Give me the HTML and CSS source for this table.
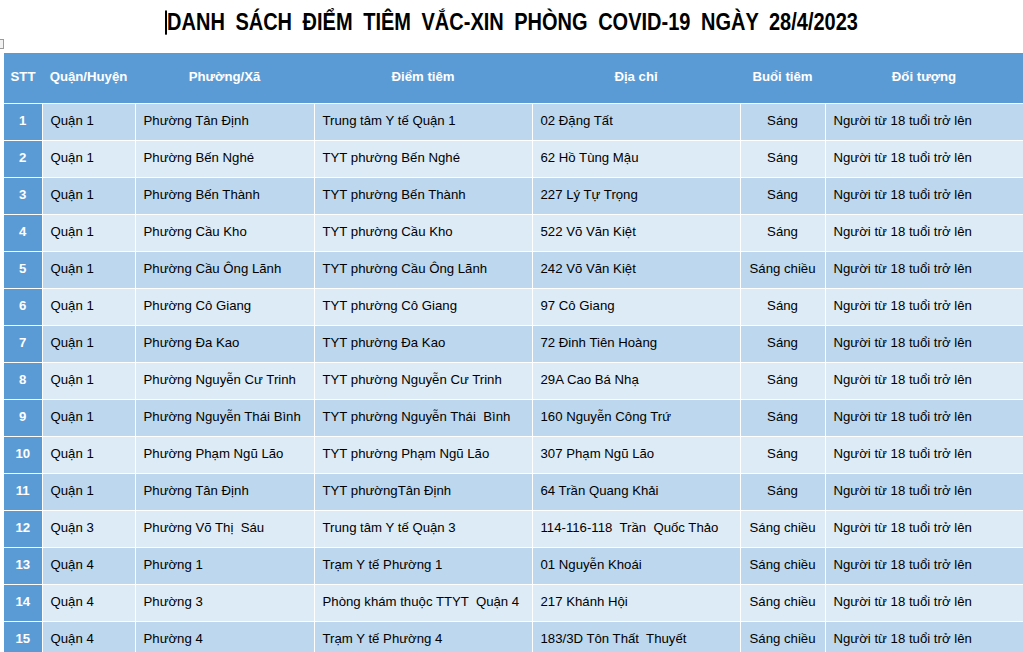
FILE: index.html
```html
<!DOCTYPE html>
<html lang="vi">
<head>
<meta charset="utf-8">
<title>Danh sách điểm tiêm</title>
<link rel="stylesheet" href="styles.css">
</head>
<body>
<div class="handle"></div>
<h1 class="title"><span class="caret"></span>DANH SÁCH ĐIỂM TIÊM VẮC-XIN PHÒNG COVID-19 NGÀY 28/4/2023</h1>
<table class="grid">
  <colgroup>
    <col class="c-stt"><col class="c-quan"><col class="c-phuong"><col class="c-diem"><col class="c-dc"><col class="c-buoi"><col class="c-dt">
  </colgroup>
  <thead>
    <tr><th>STT</th><th>Quận/Huyện</th><th>Phường/Xã</th><th>Điểm tiêm</th><th>Địa chỉ</th><th>Buổi tiêm</th><th>Đối tượng</th></tr>
  </thead>
  <tbody>
    <tr><td class="stt">1</td><td>Quận 1</td><td>Phường Tân Định</td><td>Trung tâm Y tế Quận 1</td><td>02 Đặng Tất</td><td class="mid">Sáng</td><td>Người từ 18 tuổi trở lên</td></tr>
    <tr><td class="stt">2</td><td>Quận 1</td><td>Phường Bến Nghé</td><td>TYT phường Bến Nghé</td><td>62 Hồ Tùng Mậu</td><td class="mid">Sáng</td><td>Người từ 18 tuổi trở lên</td></tr>
    <tr><td class="stt">3</td><td>Quận 1</td><td>Phường Bến Thành</td><td>TYT phường Bến Thành</td><td>227 Lý Tự Trọng</td><td class="mid">Sáng</td><td>Người từ 18 tuổi trở lên</td></tr>
    <tr><td class="stt">4</td><td>Quận 1</td><td>Phường Cầu Kho</td><td>TYT phường Cầu Kho</td><td>522 Võ Văn Kiệt</td><td class="mid">Sáng</td><td>Người từ 18 tuổi trở lên</td></tr>
    <tr><td class="stt">5</td><td>Quận 1</td><td>Phường Cầu Ông Lãnh</td><td>TYT phường Cầu Ông Lãnh</td><td>242 Võ Văn Kiệt</td><td class="mid">Sáng chiều</td><td>Người từ 18 tuổi trở lên</td></tr>
    <tr><td class="stt">6</td><td>Quận 1</td><td>Phường Cô Giang</td><td>TYT phường Cô Giang</td><td>97 Cô Giang</td><td class="mid">Sáng</td><td>Người từ 18 tuổi trở lên</td></tr>
    <tr><td class="stt">7</td><td>Quận 1</td><td>Phường Đa Kao</td><td>TYT phường Đa Kao</td><td>72 Đinh Tiên Hoàng</td><td class="mid">Sáng</td><td>Người từ 18 tuổi trở lên</td></tr>
    <tr><td class="stt">8</td><td>Quận 1</td><td>Phường Nguyễn Cư Trinh</td><td>TYT phường Nguyễn Cư Trinh</td><td>29A Cao Bá Nhạ</td><td class="mid">Sáng</td><td>Người từ 18 tuổi trở lên</td></tr>
    <tr><td class="stt">9</td><td>Quận 1</td><td>Phường Nguyễn Thái Bình</td><td>TYT phường Nguyễn Thái  Bình</td><td>160 Nguyễn Công Trứ</td><td class="mid">Sáng</td><td>Người từ 18 tuổi trở lên</td></tr>
    <tr><td class="stt">10</td><td>Quận 1</td><td>Phường Phạm Ngũ Lão</td><td>TYT phường Phạm Ngũ Lão</td><td>307 Phạm Ngũ Lão</td><td class="mid">Sáng</td><td>Người từ 18 tuổi trở lên</td></tr>
    <tr><td class="stt">11</td><td>Quận 1</td><td>Phường Tân Định</td><td>TYT phườngTân Định</td><td>64 Trần Quang Khải</td><td class="mid">Sáng</td><td>Người từ 18 tuổi trở lên</td></tr>
    <tr><td class="stt">12</td><td>Quận 3</td><td>Phường Võ Thị  Sáu</td><td>Trung tâm Y tế Quận 3</td><td>114-116-118  Trần  Quốc Thảo</td><td class="mid">Sáng chiều</td><td>Người từ 18 tuổi trở lên</td></tr>
    <tr><td class="stt">13</td><td>Quận 4</td><td>Phường 1</td><td>Trạm Y tế Phường 1</td><td>01 Nguyễn Khoái</td><td class="mid">Sáng chiều</td><td>Người từ 18 tuổi trở lên</td></tr>
    <tr><td class="stt">14</td><td>Quận 4</td><td>Phường 3</td><td>Phòng khám thuộc TTYT  Quận 4</td><td>217 Khánh Hội</td><td class="mid">Sáng chiều</td><td>Người từ 18 tuổi trở lên</td></tr>
    <tr><td class="stt">15</td><td>Quận 4</td><td>Phường 4</td><td>Trạm Y tế Phường 4</td><td>183/3D Tôn Thất  Thuyết</td><td class="mid">Sáng chiều</td><td>Người từ 18 tuổi trở lên</td></tr>
  </tbody>
</table>
</body>
</html>
```

FILE: styles.css
```css
html, body {
  margin: 0;
  padding: 0;
  background: #ffffff;
  overflow: hidden;
}
body {
  position: relative;
  width: 1023px;
  height: 652px;
  font-family: "Liberation Sans", Arial, sans-serif;
  color: #000;
}
.handle {
  position: absolute;
  left: -4px;
  top: 39px;
  width: 6px;
  height: 8px;
  border: 1px solid #9a9a9a;
  background: #f2f2f2;
}
.title {
  margin: 0;
  height: 53px;
  box-sizing: border-box;
  padding-top: 9px;
  text-align: center;
  font-size: 20px;
  font-weight: bold;
  line-height: 26px;
  word-spacing: 5px;
  white-space: pre;
  transform: scaleY(1.15);
  transform-origin: 50% 22px;
}
.caret {
  display: inline-block;
  width: 2px;
  height: 21px;
  background: #000;
  vertical-align: -4px;
}
.grid {
  margin-left: 4px;
  width: 1019px;
  table-layout: fixed;
  border-collapse: collapse;
  font-size: 13.2px;
}
.c-stt { width: 38px; }
.c-quan { width: 93px; }
.c-phuong { width: 179px; }
.c-diem { width: 218px; }
.c-dc { width: 208px; }
.c-buoi { width: 85px; }
.c-dt { width: 198px; }
.grid th {
  background: #5b9bd5;
  color: #fff;
  font-weight: bold;
  height: 50px;
  padding: 0 0 3px 0;
  box-sizing: border-box;
  text-align: center;
  border: none;
  border-bottom: 1px solid #fff;
  white-space: nowrap;
}
.grid td {
  height: 37px;
  box-sizing: border-box;
  padding: 0 0 3px 8px;
  border: 1px solid #fff;
  white-space: pre;
  overflow: hidden;
}
.grid tbody tr:nth-child(odd) td { background: #bdd7ee; }
.grid tbody tr:nth-child(even) td { background: #ddebf7; }
.grid tbody tr td.stt {
  background: #5b9bd5;
  color: #fff;
  font-weight: bold;
  text-align: center;
  padding: 0 0 3px 0;
  border-left: none;
}
.grid tbody tr td.mid {
  text-align: center;
  padding: 0 0 3px 0;
}
.grid td:last-child { border-right: none; }
```
